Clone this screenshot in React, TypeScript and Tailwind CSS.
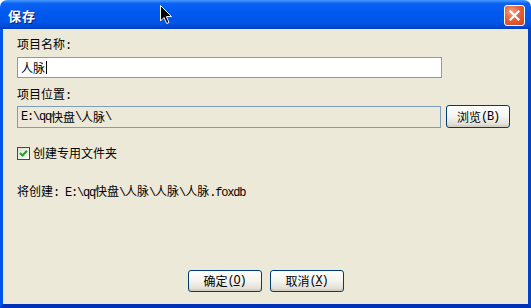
import React from "react";

const cjk = "font-['Noto_Sans_CJK_SC',sans-serif]";

// ascii runs look like SimSun half-width glyphs, so give them a mono face
const Mixed = ({ text }: { text: string }) => {
  const parts = text.split(/([\x00-\x7f]+)/).filter((p) => p.length > 0);
  return (
    <>
      {parts.map((p, i) =>
        /^[\x00-\x7f]+$/.test(p) ? (
          <span key={i} className="font-['Liberation_Mono',monospace] text-[12px] tracking-[-1.2px] whitespace-pre">
            {p}
          </span>
        ) : (
          <span key={i}>{p}</span>
        )
      )}
    </>
  );
};

const XpButton = ({ children, className = "" }: { children: React.ReactNode; className?: string }) => (
  <button
    className={`h-[22px] rounded-[3px] border border-[#003c74] bg-gradient-to-b from-white via-[#f5f4ef] to-[#dcd9cc] text-[12px] leading-none text-black shadow-[inset_0_-2px_0_#d6d0c5] flex items-center justify-center ${cjk} ${className}`}
  >
    {children}
  </button>
);

export default function App() {
  return (
    <div className="w-[531px] h-[308px] bg-white relative overflow-hidden">
      <div className={`w-full h-full flex flex-col ${cjk}`}>
        {/* title bar */}
        <div className="h-[29px] shrink-0 rounded-t-[7px] bg-[linear-gradient(to_bottom,#4a9cff_0%,#0a62f4_12%,#0058ee_45%,#0056e8_75%,#004ad6_92%,#003cc0_100%)] flex items-center pl-2 pr-[6px]">
          <span className="text-white font-bold text-[13px] leading-none mt-[1px] tracking-[1px] [text-shadow:1px_1px_0_#0a1e6e]">
            保存
          </span>
          <div className="ml-auto w-[21px] h-[21px] rounded-[3px] border border-white bg-[radial-gradient(circle_at_35%_30%,#f4a184_0%,#e6603a_45%,#cf4419_100%)] flex items-center justify-center mt-[1px]">
            <svg width="11" height="11" viewBox="0 0 11 11">
              <path d="M1.5 1.5 L9.5 9.5 M9.5 1.5 L1.5 9.5" stroke="white" strokeWidth="2.2" strokeLinecap="square" />
            </svg>
          </div>
        </div>

        {/* body with xp frame */}
        <div className="flex-1 flex flex-col bg-[#ece9d8] border-l-[3px] border-r-[3px] border-b-[4px] border-l-[#0055ea] border-r-[#0041c8] border-b-[#0031b8] pl-[14px] pr-[18px] pb-[12px] text-[12px] text-black">
          <div className="mt-[7px] h-[16px] leading-[16px]">
            <Mixed text="项目名称:" />
          </div>
          <div className="mt-[5px] w-[425px] h-[21px] border border-[#7f9db9] bg-white flex items-center pl-[3px] leading-none">
            <span>人脉</span>
            <span className="w-px h-[13px] bg-black ml-[1px]" />
          </div>

          <div className="mt-[8px] h-[16px] leading-[16px]">
            <Mixed text="项目位置:" />
          </div>
          <div className="mt-[3px] flex items-center gap-[5px]">
            <div className="w-[425px] h-[22px] border border-[#7f9db9] bg-[#ece9d8] flex items-center pl-[3px] leading-none">
              <Mixed text="E:\qq快盘\人脉\" />
            </div>
            <XpButton className="w-[64px] h-[23px]">
              <Mixed text="浏览(B)" />
            </XpButton>
          </div>

          <div className="mt-[17px] flex items-center gap-[3px]">
            <div className="w-[13px] h-[13px] border border-[#1c5180] bg-gradient-to-br from-[#dcdcd7] to-white flex items-center justify-center">
              <svg width="9" height="9" viewBox="0 0 9 9">
                <path d="M1 4 L3.5 6.5 L8 1.8" stroke="#21a121" strokeWidth="2" fill="none" />
              </svg>
            </div>
            <span className="leading-[16px]">创建专用文件夹</span>
          </div>

          <div className="mt-[22px] h-[16px] leading-[16px]">
            <Mixed text="将创建: E:\qq快盘\人脉\人脉\人脉.foxdb" />
          </div>

          <div className="mt-auto flex justify-center gap-2 pl-[4px]">
            <XpButton className="w-[74px]">
              <Mixed text="确定(" />
              <span className="font-['Liberation_Mono',monospace] text-[12px] tracking-[-1.2px] underline">O</span>
              <Mixed text=")" />
            </XpButton>
            <XpButton className="w-[74px]">
              <Mixed text="取消(" />
              <span className="font-['Liberation_Mono',monospace] text-[12px] tracking-[-1.2px] underline">X</span>
              <Mixed text=")" />
            </XpButton>
          </div>
        </div>
      </div>

      {/* mouse pointer over the title bar */}
      <svg className="absolute left-[160px] top-[5px]" width="13" height="20" viewBox="0 0 13 20">
        <path d="M0.5 0.5 L0.5 16 L4 12.5 L6.7 18.5 L9 17.5 L6.4 11.6 L11.5 11.6 Z" fill="black" stroke="white" strokeWidth="1" />
      </svg>
    </div>
  );
}
